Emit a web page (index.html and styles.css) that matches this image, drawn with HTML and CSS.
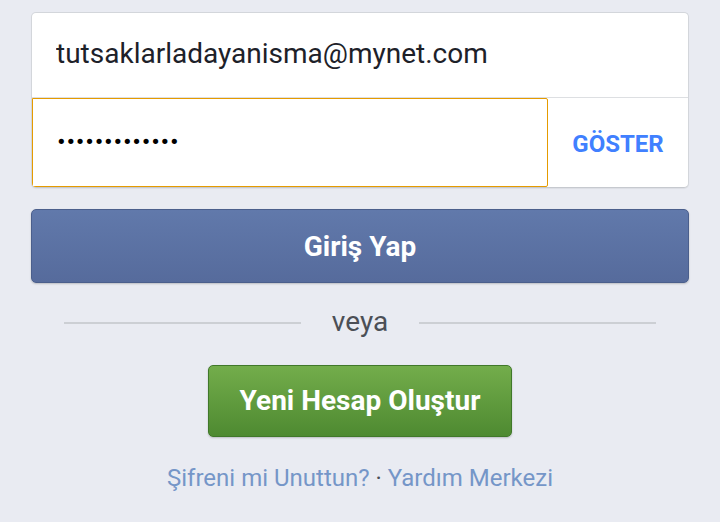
FILE: index.html
```html
<!DOCTYPE html>
<html lang="tr">
<head>
	<meta charset="utf-8">
	<title>Giriş Yap</title>
	<meta name="viewport" content="width=device-width, initial-scale=1">
	<link rel="stylesheet" href="styles.css">
</head>
<body>
	<div class="main">
		<div class="box">
			<div class="field email_field">
				<input type="text" class="text_input" value="tutsaklarladayanisma@mynet.com" />
			</div>
			<div class="field pass_field">
				<div class="pass_wrap">
					<span class="dots">•••••••••••••</span>
				</div>
				<span class="show_btn">GÖSTER</span>
			</div>
		</div>
		<button class="btn btn_login">Giriş Yap</button>
		<div class="divider">
			<span class="line"></span>
			<span class="or">veya</span>
			<span class="line"></span>
		</div>
		<div class="center">
			<button class="btn btn_signup">Yeni Hesap Oluştur</button>
		</div>
		<div class="links">
			<a href="#">Şifreni mi Unuttun?</a>
			<span class="sep">·</span>
			<a href="#">Yardım Merkezi</a>
		</div>
	</div>
</body>
</html>
```

FILE: styles.css
```css
html, body {
	margin: 0;
	padding: 0;
	background: #e9ebf2;
	font-family: Roboto, "Noto Sans", sans-serif;
}
.main {
	padding: 12px 31px 0 31px;
	box-sizing: border-box;
	width: 720px;
}
.box {
	background: #fff;
	border: 1px solid #d3d6db;
	border-bottom-color: #c6c9cf;
	border-radius: 5px;
	box-shadow: 0 1px 1px rgba(0, 0, 0, 0.06);
	overflow: hidden;
}
.field {
	box-sizing: border-box;
}
.email_field {
	height: 85px;
	border-bottom: 1px solid #dddfe2;
	display: flex;
	align-items: center;
	padding-bottom: 3px;
}
.text_input {
	border: none;
	outline: none;
	width: 100%;
	padding: 0 0 0 24px;
	font-family: Roboto, "Noto Sans", sans-serif;
	font-size: 28px;
	color: #1d2129;
	background: transparent;
}
.pass_field {
	height: 89px;
	display: flex;
}
.pass_wrap {
	flex: 1;
	border: 1px solid #e59b00;
	border-radius: 0 2px 2px 0;
	display: flex;
	align-items: center;
	padding-left: 23px;
}
.dots {
	color: #000;
	font-family: "DejaVu Sans", sans-serif;
	font-size: 18px;
	letter-spacing: -1.2px;
	padding-bottom: 2px;
}
.show_btn {
	width: 140px;
	display: flex;
	align-items: center;
	justify-content: center;
	color: #4080ff;
	font-weight: bold;
	font-size: 24px;
	padding-top: 2px;
}
.btn {
	display: block;
	border-radius: 5px;
	color: #fff;
	font-family: Roboto, "Noto Sans", sans-serif;
	font-weight: bold;
	font-size: 28px;
	cursor: pointer;
}
.btn_login {
	margin-top: 21px;
	width: 100%;
	height: 74px;
	background: linear-gradient(#6179ab, #566b9c);
	border: 1px solid #4b5f8c;
	box-shadow: 0 1px 2px rgba(0, 0, 0, 0.2);
}
.divider {
	display: flex;
	align-items: center;
	margin: 20px 33px 0 33px;
	height: 40px;
}
.line {
	flex: 1;
	height: 2px;
	background: #cccfd4;
}
.or {
	padding: 0 31px;
	font-size: 28px;
	color: #4b4f56;
	line-height: 40px;
	padding-bottom: 2px;
}
.center {
	display: flex;
	justify-content: center;
	margin-top: 22px;
}
.btn_signup {
	width: 304px;
	height: 72px;
	background: linear-gradient(#73ad4b, #4e8a31);
	border: 1px solid #40782a;
	box-shadow: 0 1px 2px rgba(0, 0, 0, 0.2);
	padding-bottom: 3px;
}
.links {
	text-align: center;
	margin-top: 27px;
	font-size: 24px;
	color: #7596c8;
}
.links a {
	color: #7596c8;
	text-decoration: none;
}
.sep {
	color: #4b4f56;
	padding: 0;
}
```
